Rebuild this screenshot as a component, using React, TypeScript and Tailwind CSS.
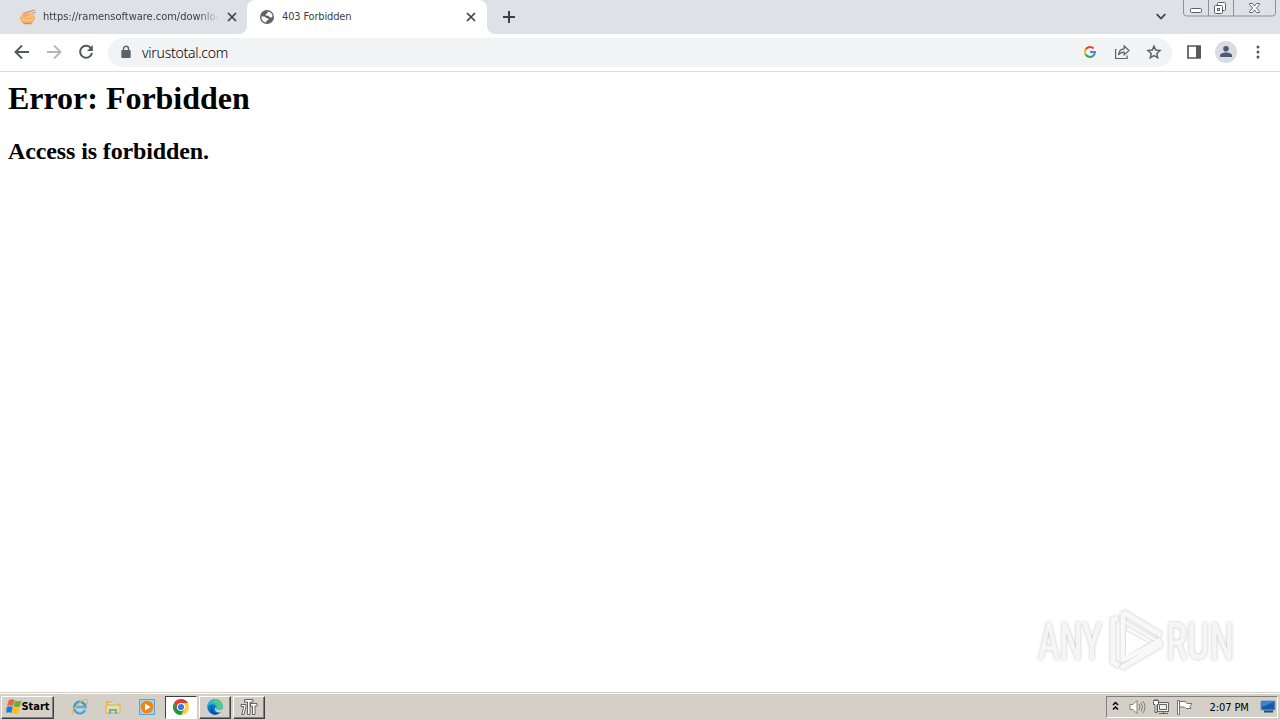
import React from "react";

const ui = "font-['DejaVu_Sans_Condensed','DejaVu_Sans',sans-serif] [font-stretch:75%]";

function Close() {
  return (
    <svg width="10" height="10" viewBox="0 0 10 10" stroke="#3c4043" strokeWidth="1.7" className="shrink-0">
      <path d="M1 1l8 8M9 1L1 9" />
    </svg>
  );
}

function RamenIcon() {
  return (
    <svg width="18" height="17" viewBox="0 0 18 17" className="shrink-0">
      <path d="M5 4L16 1M5 5.5L17 3.5" stroke="#b78f80" strokeWidth="1.1" />
      <ellipse cx="8.7" cy="7.2" rx="6.8" ry="4" fill="#f5c27a" />
      <path d="M5 3v5M7 3v5M9 3v4" stroke="#ee9a68" strokeWidth="1.2" />
      <path d="M1 7c2 3 12 3 15 0 0 4-1.5 6-4 8H5C2 13 1 11 1 7z" fill="#f0ac6b" />
      <path d="M3 10c3 2 8 2 11 0" stroke="#ffcd72" strokeWidth="1.6" fill="none" />
      <path d="M4.5 14.7h8" stroke="#b98d78" />
    </svg>
  );
}

function Globe() {
  return (
    <svg width="14" height="14" viewBox="0 0 14 14" className="shrink-0">
      <circle cx="7" cy="7" r="7" fill="#5f6368" />
      <path d="M7.5 1.4C10 1.5 12.3 3.4 12.6 6c-.8 1.8-2 1.9-3.3 1.1L8.500 5.800 5.700 5.500 6 3.800l1.700-.5zM1.400 6.500l3.200.1 1.700 1.500 2 .4v1.600l-1.700.6-.5 1.800C3.400 12 1.300 9.600 1.400 6.500z" fill="white" />
    </svg>
  );
}

function TabStrip() {
  return (
    <div className="flex h-[34px] bg-[#dee1e6]">
      <div className="flex h-[34px] w-[247px] items-center pl-[19px]">
        <RamenIcon />
        <div className="ml-[6px] w-[176px] overflow-hidden whitespace-nowrap text-[11px] tracking-[-0.02px] text-[#3c4043] [mask-image:linear-gradient(to_right,black_155px,transparent)]">
          https://ramensoftware.com/downloads
        </div>
        <div className="ml-[8px]"><Close /></div>
      </div>
      <div className="relative flex h-[34px] w-[240px] items-center rounded-t-[8px] bg-white pl-[13px]">
        <svg className="absolute -left-[8px] bottom-0" width="8" height="8"><path d="M8 0v8H0a8 8 0 0 0 8-8" fill="white" /></svg>
        <svg className="absolute -right-[8px] bottom-0" width="8" height="8"><path d="M0 0v8h8a8 8 0 0 1-8-8" fill="white" /></svg>
        <Globe />
        <span className="ml-[8px] w-[184px] text-[11px] tracking-[-0.16px] text-[#3c4043]">403 Forbidden</span>
        <Close />
      </div>
      <svg className="ml-[16px] mt-[11px]" width="12" height="12" stroke="#3c4043" strokeWidth="2"><path d="M6 0v12M0 6h12" /></svg>
      <div className="grow" />
      <svg className="mr-[17px] mt-[13px]" width="10" height="8" fill="none" stroke="#3c4043" strokeWidth="1.7"><path d="M.7 1.2L5 5.6 9.3 1.2" /></svg>
      <svg width="97" height="18" viewBox="0 0 97 18" fill="none">
        <path d="M.5 0v13a3 3 0 0 0 3 3h86a3 3 0 0 0 3-3V0M25.500 0v16M50.500 0v16" stroke="#8d9096" />
        <rect x="7.500" y="8.500" width="11" height="4" rx="1" fill="white" stroke="#5b5e66" />
        <rect x="34.500" y="2.500" width="8" height="8" rx="1" fill="white" stroke="#5b5e66" />
        <rect x="31.500" y="5.500" width="8" height="8" rx="1" fill="white" stroke="#5b5e66" />
        <rect x="34.500" y="8.500" width="2" height="2" stroke="#5b5e66" />
        <path d="M66.500 3.500h3l2 2.500 2-2.500h3v1l-3 3.500 3 3.500v1h-3l-2-2.500-2 2.500h-3v-1l3-3.500-3-3.500z" fill="white" stroke="#62656d" />
      </svg>
    </div>
  );
}

function Toolbar() {
  return (
    <div className="flex h-[38px] items-center border-b border-[#d9dbdd] bg-white pb-px">
      <svg className="ml-[14px]" width="16" height="16" fill="none" stroke="#55585d" strokeWidth="1.9"><path d="M15 8H2M8 1.500L1.500 8 8 14.500" /></svg>
      <svg className="ml-[16px]" width="16" height="16" fill="none" stroke="#b5b7ba" strokeWidth="1.9"><path d="M1 8h13M8 1.500L14.500 8 8 14.500" /></svg>
      <svg className="ml-[16px]" width="16" height="16" fill="none" stroke="#55585d" strokeWidth="2"><path d="M13 4.200A6 6 0 1 0 14 9" /><path d="M14.800 1v6H9z" fill="#55585d" stroke="none" /></svg>
      <div className="ml-[14px] flex h-[29px] w-[1064px] items-center rounded-full bg-[#f1f3f4]">
        <svg className="ml-[13px]" width="10" height="14"><path d="M2.500 6V3.700a2.500 2.500 0 0 1 5 0V6" fill="none" stroke="#5f6368" strokeWidth="1.400" /><rect x=".3" y="5" width="9.400" height="8" rx="1" fill="#5f6368" /></svg>
        <span className="ml-[11px] font-['Noto_Sans',sans-serif] text-[14px] font-light tracking-[-0.26px] text-black">virustotal.com</span>
        <div className="grow" />
        <svg width="12" height="12" viewBox="0 0 12 12" fill="none" strokeWidth="2">
          <path d="M1.600 3.600A5 5 0 0 1 9.500 2.500" stroke="#ea4335" />
          <path d="M1.600 3.500a5 5 0 0 0 0 5" stroke="#fbbc05" />
          <path d="M1.600 8.300a5 5 0 0 0 7.500 1.600" stroke="#34a853" />
          <path d="M6 6h5a5 5 0 0 1-2.200 4" stroke="#4285f4" />
        </svg>
        <svg className="ml-[18px]" width="16" height="16" fill="none" stroke="#5f6368" strokeWidth="1.200"><path d="M2.500 5.500H1.600v9h11.500v-3M4.500 11c.2-4 2-6 5.700-6.200V2l4.800 4.500-4.800 4.400V8.100c-2.800 0-4.500.9-5.700 2.900z" /></svg>
        <svg className="ml-[16px] mr-[10px]" width="16" height="16" fill="none" stroke="#5f6368" strokeWidth="1.500"><path d="M8 2.200l1.700 3.900 4.300.4-3.200 2.900.9 4.300L8 11.500l-3.700 2.200.9-4.300L2 6.500l4.300-.4z" /></svg>
      </div>
      <svg className="ml-[15px]" width="14" height="14"><path d="M1 1h12v12H1z" fill="none" stroke="#55585d" strokeWidth="1.700" /><path d="M9 1h5v12H9z" fill="#55585d" /></svg>
      <svg className="ml-[14px]" width="22" height="22"><circle cx="11" cy="11" r="11" fill="#dadce0" /><circle cx="11" cy="7.700" r="2.800" fill="#4d5977" /><path d="M5 16v-1.500c0-4 12-4 12 0V16z" fill="#4d5977" /></svg>
      <svg className="ml-[19px]" width="4" height="14" fill="#55585d"><circle cx="2" cy="2" r="1.500" /><circle cx="2" cy="7" r="1.500" /><circle cx="2" cy="12" r="1.500" /></svg>
    </div>
  );
}

function Watermark() {
  return (
    <svg className="absolute left-[1030px] top-[600px] [filter:drop-shadow(0_0.5px_1.5px_#bdbdbd)]" width="225" height="90" viewBox="0 0 225 90">
      <g fill="#f5f5f5" stroke="#fafafa" strokeWidth=".8" className="font-['Roboto',sans-serif] text-[50px]">
        <text x="8" y="59" textLength="64" lengthAdjust="spacingAndGlyphs">ANY</text>
        <text x="136" y="59" textLength="68" lengthAdjust="spacingAndGlyphs">RUN</text>
      </g>
      <g fill="none" stroke="#f8f8f8" strokeWidth="5" strokeLinejoin="round">
        <path d="M93 12L131 35M93 12v48l38-20M91 68l41-24" />
        <path d="M93 21l36 21" strokeWidth="3" />
        <path d="M88 19h-5v43l6 4" />
      </g>
      <path d="M96 31v25l22-13z" fill="white" />
    </svg>
  );
}

function Windows() {
  return (
    <svg width="16" height="15" viewBox="0 0 16 15">
      <path d="M3 1c2-1 4-1 5.500 0L7 7c-2-1-4-1-6 0z" fill="#e86537" />
      <path d="M9 1.500c2 1 4 1 6.500 0L14 7.500c-2 1-4 1-6.500 0z" fill="#75ac38" />
      <path d="M.8 8c2-1 4-1 6 0l-1.500 6c-2-1-4-1-5.300 0z" fill="#2979c9" />
      <path d="M7.200 8.500c2 1 4 1 6.500 0l-1.500 5.500c-2 1-4 1-6.500 0z" fill="#f5bd26" />
    </svg>
  );
}

function Explorer() {
  return (
    <svg width="18" height="18" viewBox="0 0 18 18" fill="none">
      <path d="M14 12A5.700 5.700 0 1 1 14.500 9H4" stroke="#3b9bd6" strokeWidth="2.500" />
      <path d="M13.500 11.500A5 5 0 0 1 4 9h11" stroke="#79c9ee" strokeWidth="1" />
      <path d="M2 16C-1 13 11 0 16 1.500c1.500.500 1 3-.500 5" stroke="#e3b75d" strokeWidth="1.200" />
    </svg>
  );
}

function Folder() {
  return (
    <svg width="16" height="16" viewBox="0 0 16 16">
      <path d="M1 2h5l1 2h7v9H1z" fill="#dfbd58" /><path d="M3 4h10v6H3z" fill="#b9dff2" />
      <path d="M1 6h14v8H1z" fill="#f4df8d" stroke="#cda745" strokeWidth=".8" />
      <path d="M4 15v-5h8v5h-2v-3H6v3z" fill="#58afd7" />
    </svg>
  );
}

function Chrome() {
  return (
    <svg width="16" height="16" viewBox="0 0 16 16">
      <circle cx="8" cy="8" r="8" fill="#ffcd40" />
      <path d="M1.070 4A8 8 0 0 1 14.900 4H8L4.500 10z" fill="#e33b2e" />
      <path d="M1.070 4A8 8 0 0 0 8 16l3.500-6H4.500z" fill="#229342" />
      <circle cx="8" cy="8" r="4" fill="white" /><circle cx="8" cy="8" r="3.100" fill="#347be5" />
    </svg>
  );
}

function Edge() {
  return (
    <svg width="16" height="16" viewBox="0 0 16 16">
      <circle cx="8" cy="8" r="7.700" fill="#0a78c8" />
      <path d="M.3 8C.2 3.500 4 .3 8 .3c4.500 0 7.700 3.200 7.700 6.700 0 3-2.600 4.300-5 4-1.500-.2-1.700-.8-1.200-1.500C10 8 8.500 5.500 5.500 5.300 3 5.200 1 6.500.3 8z" fill="#2ab6cf" />
      <path d="M7 .4c5-.5 8.700 3 8.700 6.600 0 3-2.600 4.300-5 4-1.500-.2-1.700-.8-1.200-1.500 1.500-3-.5-6-4-6z" fill="#52c985" />
      <path d="M5.800 7.500c-1.800 4 2 7.800 7.200 5.800-3.500 4-9.500 2.500-9.800-1.500 0-2 1-3.500 2.600-4.300z" fill="#07509f" />
      <path d="M9.600 9.500c-.5 1-.2 1.300 1 1.500 1.700.2 3.400-.2 4.500-1.300l1 1.300-2.700 2.300c-3.500 1.300-6.500-1.500-5-5z" fill="#d4d0c8" />
    </svg>
  );
}

const raised = "flex h-[23px] items-center justify-center border border-t-white border-l-white border-b-[#404040] border-r-[#404040] shadow-[inset_-1px_-1px_0_#808080] pb-[2px]";

function Taskbar() {
  return (
    <div className="flex h-[28px] border-t border-[#d4d0c8] bg-[#d4d0c8] pt-[3px] shadow-[inset_0_1px_0_white]">
      <div className={`${raised} ml-[1px] w-[53px] ${ui} text-[11px] font-bold text-black`}>
        <Windows /><span className="relative top-px tracking-[-0.05px]">Start</span>
      </div>
      <div className="ml-[17px] flex h-[22px] items-center">
        <Explorer />
        <div className="ml-[16px]"><Folder /></div>
        <svg className="ml-[18px]" width="16" height="16"><rect x=".5" y=".5" width="15" height="15" fill="#a7d0e7" stroke="#64a3c9" /><circle cx="8" cy="8" r="6.300" fill="#ee8617" /><path d="M6 4.500v7L11.500 8z" fill="white" /></svg>
      </div>
      <div className="ml-[10px] flex h-[23px] w-[32px] items-center justify-center border border-b-white border-l-[#404040] border-r-white border-t-[#404040] bg-white pb-px"><Chrome /></div>
      <div className={`${raised} ml-[2px] w-[32px]`}><Edge /></div>
      <div className={`${raised} ml-[2px] w-[32px]`}>
        <svg width="18" height="18" viewBox="0 0 18 18" fill="white" stroke="#555" strokeWidth=".9"><path d="M1 6.500h5v2l-2 8H1.800l2-8H1zM4.500 1.500h8.500V4h-3v12.500H7.500V4h-3zM10.500 5.500h6.500V8h-2v8.500h-2.500V8h-2z" /></svg>
      </div>
      <div className="grow" />
      <div className="mr-[2px] flex h-[22px] w-[172px] items-center border border-b-white border-l-[#808080] border-r-white border-t-[#808080] pl-[5px]">
        <svg className="relative -top-px" width="7" height="10" fill="none" stroke="black" strokeWidth="1.500"><path d="M1 4l2.500-2.500L6 4M1 8.500L3.500 6 6 8.500" /></svg>
        <svg className="ml-[10px]" width="17" height="16" fill="white" stroke="#777" strokeWidth=".9"><path d="M1 5.500h3l4-4v13l-4-4H1z" /><path d="M10 5q2 3 0 6M12 3.500q3 4.500 0 9M14 2q4 6 0 12" fill="none" /></svg>
        <svg className="ml-[7px]" width="17" height="16" fill="#eee" stroke="#555" strokeWidth=".9"><path d="M4.500 3.500h11v9h-11zM6.500 5.500h7v5h-7zM6 14.500h9M10.500 12.500v2" /><path d="M.5 1.500h5v4h-1.500v8H2v-8H.5zM2 0v2M4 0v2" fill="white" /></svg>
        <svg className="relative -left-px ml-[7px]" width="17" height="16" fill="white" stroke="#666" strokeWidth=".9"><path d="M1.500 1.500h2v14h-2zM3.500 2.500h6l1.500 2h5l-2 3 1 2h-5L8.500 8h-5z" /></svg>
        <span className={`relative top-px ml-[16px] w-[42px] whitespace-nowrap ${ui} text-[11px] tracking-[-0.1px] text-black`}>2:07 PM</span>
        <svg className="ml-[9px]" width="17" height="14"><path d="M1 1h14v9H1z" fill="#1858a8" stroke="#6f9dce" /><path d="M2 2h12L2 7z" fill="#3a83d5" /><path d="M4 11.500h9" stroke="#234875" strokeWidth="2" /></svg>
      </div>
    </div>
  );
}

export default function App() {
  return (
    <div className={`relative flex h-[720px] w-[1280px] flex-col overflow-hidden bg-white ${ui}`}>
      <TabStrip />
      <Toolbar />
      <main className="h-[620px] pl-[8px] pt-[8px] font-['Liberation_Serif',serif] font-bold text-black">
        <h1 className="text-[32px] leading-[37px] tracking-[-0.02px]">Error: Forbidden</h1>
        <h2 className="mt-[21px] text-[24px] leading-[27px] tracking-[-0.12px]">Access is forbidden.</h2>
      </main>
      <Taskbar />
      <Watermark />
    </div>
  );
}
